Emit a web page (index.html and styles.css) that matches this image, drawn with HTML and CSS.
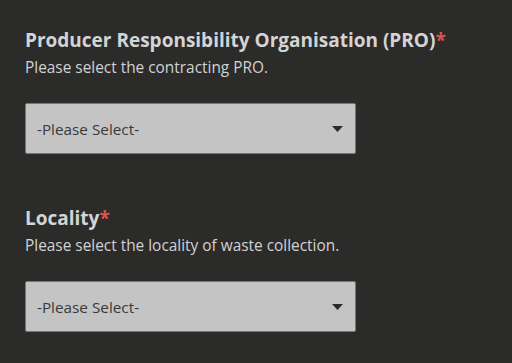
FILE: index.html
```html
<!DOCTYPE html>
<html>
<head>
<meta charset="utf-8">
<link rel="stylesheet" href="styles.css">
</head>
<body>
<div class="form">
  <div class="field">
    <div class="label">Producer Responsibility Organisation (PRO)<span class="req">*</span></div>
    <div class="hint">Please select the contracting PRO.</div>
    <div class="select">
      <span class="value">-Please Select-</span>
      <svg class="caret" width="11" height="6" viewBox="0 0 11 6"><path d="M0 0H11L5.5 6Z" fill="#2b2b2b"/></svg>
    </div>
  </div>
  <div class="field">
    <div class="label">Locality<span class="req">*</span></div>
    <div class="hint">Please select the locality of waste collection.</div>
    <div class="select">
      <span class="value">-Please Select-</span>
      <svg class="caret" width="11" height="6" viewBox="0 0 11 6"><path d="M0 0H11L5.5 6Z" fill="#2b2b2b"/></svg>
    </div>
  </div>
</div>
</body>
</html>
```
FILE: styles.css
```css
html, body {
  margin: 0;
  background: #2b2b2a;
  height: 100%;
}
body {
  font-family: "Open Sans", "Noto Sans", sans-serif;
}
.form {
  padding: 28px 0 0 25px;
  display: flex;
  flex-direction: column;
  gap: 52px;
}
.field {
  display: flex;
  flex-direction: column;
}
.label {
  color: #d4d4d4;
  font-weight: 700;
  font-size: 19px;
  line-height: 24px;
}
.req {
  color: #d9534f;
}
.hint {
  color: #d2d2d2;
  font-size: 15.4px;
  line-height: 20px;
  margin-top: 6px;
}
.select {
  margin-top: 25px;
  width: 331px;
  height: 51px;
  box-sizing: border-box;
  border: 1px solid #777;
  border-radius: 2px;
  background: #c4c4c4;
  display: flex;
  align-items: center;
  justify-content: space-between;
  padding: 0 12px 0 11px;
}
.value {
  color: #3a3a3a;
  font-size: 15.3px;
}
.caret {
  display: block;
}
```
